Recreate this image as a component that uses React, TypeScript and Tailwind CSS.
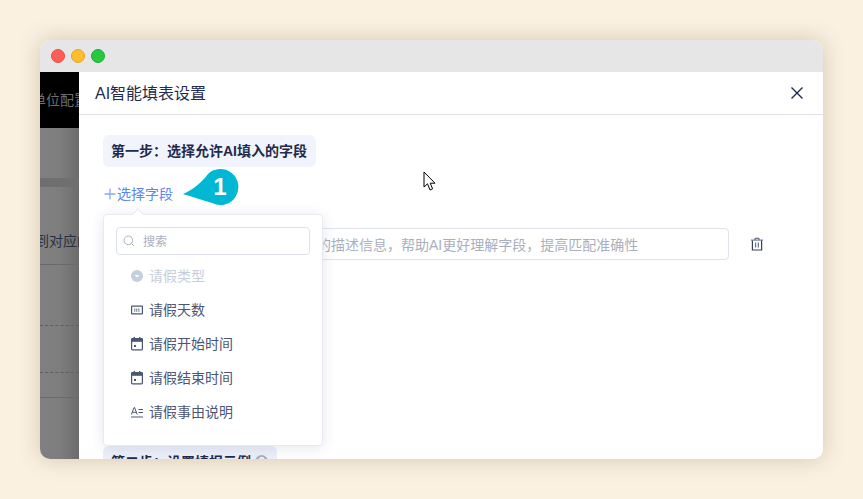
const font = { fontFamily: '"Liberation Sans", "Noto Sans CJK SC", sans-serif' };

function NumIcon() {
  return (
    <svg width="12" height="14" viewBox="0 0 12 14" fill="none">
      <rect x="0.6" y="3.1" width="10.8" height="7.8" rx="0.5" stroke="#4a5674" strokeWidth="1.2" />
      <path d="M3 6.2h6M3 8h6" stroke="#4a5674" strokeWidth="1" strokeDasharray="1.2 0.6" />
    </svg>
  );
}
function CalIcon() {
  return (
    <svg width="12" height="14" viewBox="0 0 12 14" fill="none">
      <rect x="0.6" y="1.6" width="10.8" height="11.2" rx="0.8" stroke="#4a5674" strokeWidth="1.2" />
      <rect x="0.6" y="1.6" width="10.8" height="3.2" fill="#4a5674" />
      <rect x="2.6" y="0" width="1.4" height="2" fill="#4a5674" />
      <rect x="8" y="0" width="1.4" height="2" fill="#4a5674" />
      <rect x="3" y="8" width="2" height="2" fill="#4a5674" />
    </svg>
  );
}
function TextIcon() {
  return (
    <svg width="12" height="14" viewBox="0 0 12 14" fill="none">
      <path d="M0.4 9.5 3 2.6h.6l2.6 6.9M1.4 7.3h3.8" stroke="#4a5674" strokeWidth="1" />
      <path d="M7.5 4.5H12M7.5 7.5H12M0 12h12" stroke="#4a5674" strokeWidth="1.1" />
    </svg>
  );
}
function SelectIcon() {
  return (
    <svg width="12" height="14" viewBox="0 0 12 14">
      <circle cx="6" cy="7" r="6" fill="#c5cedb" />
      <path d="M3.4 5.9h5.2L6 8.6z" fill="#fff" />
    </svg>
  );
}

const items = [
  { icon: <NumIcon />, label: "请假天数" },
  { icon: <CalIcon />, label: "请假开始时间" },
  { icon: <CalIcon />, label: "请假结束时间" },
  { icon: <TextIcon />, label: "请假事由说明" },
];

export default function App() {
  return (
    <div className="h-[499px] w-[863px] overflow-hidden bg-[#faf1e1] pt-10 pl-10" style={font}>
      <div className="relative flex h-[419px] w-[783px] flex-col overflow-hidden rounded-[10px] bg-white shadow-[0_0_22px_rgba(120,90,40,0.28)]">
        <div className="flex h-8 shrink-0 items-center gap-1.5 bg-[#e6e6e6] pl-[11px]">
          <span className="h-3.5 w-3.5 rounded-full border border-[#e5504a] bg-[#ff5f57]" />
          <span className="h-3.5 w-3.5 rounded-full border border-[#e0a52a] bg-[#febc2e]" />
          <span className="h-3.5 w-3.5 rounded-full border border-[#20ad37] bg-[#28c840]" />
        </div>
        <div className="flex min-h-0 flex-1">
          {/* dimmed page behind the drawer */}
          <div className="flex w-[39px] shrink-0 flex-col overflow-hidden bg-gradient-to-r from-[#808080] via-[#7e7e7e] to-[#6c6c6c]">
            <div className="flex h-14 shrink-0 items-center bg-black">
              <span className="-ml-2 text-sm whitespace-nowrap text-[#6e6e6e]">单位配置</span>
            </div>
            <div className="mt-[50px] h-[9px] shrink-0 bg-[#6f6f6f]" />
            <div className="flex h-[78px] shrink-0 items-start border-b border-[#6a6a6a] pt-[44px]">
              <span className="-ml-[5px] text-sm leading-5 whitespace-nowrap text-[#28303f]">到对应的</span>
            </div>
            <div className="h-[61px] shrink-0 border-b border-dashed border-[#5f5f5f]" />
            <div className="h-[47px] shrink-0 border-b border-dashed border-[#5f5f5f]" />
            <div className="h-[25px] shrink-0 border-b border-[#6a6a6a]" />
          </div>
          {/* drawer */}
          <div className="relative min-w-0 flex-1 bg-white">
            <div className="flex h-[43px] items-center justify-between border-b border-[#e1e3ea] pr-[18px] pl-4">
              <span className="pt-px text-base text-[#1f2b4d]">AI智能填表设置</span>
              <svg width="16" height="16" viewBox="0 0 16 16" fill="none">
                <path d="M2.5 2.5l11 11M13.5 2.5l-11 11" stroke="#1f2b4d" strokeWidth="1.4" />
              </svg>
            </div>
            <div className="relative pt-5 pl-6">
              <div className="flex h-8 w-[213px] items-center rounded-md bg-[#f1f4fc] pl-2 text-sm font-bold whitespace-nowrap text-[#1f2b4d]">
                {"第一步\uFF1A选择允许AI填入的字段"}
              </div>
              <div className="mt-[16px] flex h-[22px] items-center text-sm text-[#5b86f0]">
                <svg width="14" height="14" viewBox="0 0 14 14" fill="none">
                  <path d="M7 1.5v11M1.5 7h11" stroke="#8ba8f5" strokeWidth="1.3" />
                </svg>
                选择字段
              </div>
              <div className="mt-[23px] flex items-center pl-[132px]">
                <div className="flex h-8 w-[494px] items-center overflow-hidden rounded border border-[#e1e3ea] pt-px pl-[11px] text-sm whitespace-nowrap text-[#a9afbd]">
                  {"请输入字段的描述信息\uFF0C帮助AI更好理解字段\uFF0C提高匹配准确性"}
                </div>
                <svg className="ml-[21px]" width="14" height="14" viewBox="0 0 14 14" fill="none">
                  <path d="M1 3.2h12" stroke="#7d869c" strokeWidth="1.2" />
                  <path d="M5 3V1.3h4V3" stroke="#4a5674" strokeWidth="1" />
                  <path d="M2.4 3.4v9.6h9.2V3.4" stroke="#33405f" strokeWidth="1.2" />
                  <path d="M5.7 5.5v5M8.3 5.5v5" stroke="#4a5674" strokeWidth="1" />
                </svg>
              </div>
              <div className="mt-[186px] flex h-7 w-[174px] items-start gap-1 rounded-t-md bg-[#eceff8] pt-[9px] pl-2 text-sm leading-[14px] font-bold whitespace-nowrap text-[#1f2b4d]">
                {"第二步\uFF1A设置填报示例"}
                <span className="flex h-[13px] w-[13px] items-center justify-center rounded-full bg-[#a9afbd] text-[10px] leading-none text-white">?</span>
              </div>
            </div>

            {/* tooltip bubble */}
            <svg className="absolute top-[95px] left-[102px]" width="60" height="42" viewBox="0 0 60 42">
              <path d="M2 27 C12 23 21 15 27 7 A18 18 0 1 1 31 36 C21 33 12 30 2 27Z" fill="#00b8d4" />
              <text x="39" y="28" textAnchor="middle" fill="#fff" fontSize="24" fontWeight="700" fontFamily="Liberation Sans">1</text>
            </svg>

            {/* dropdown */}
            <div className="absolute top-[142px] left-[24px] h-[232px] w-[220px] rounded border border-[#e8eaf0] bg-white shadow-[0_2px_14px_rgba(30,50,100,0.12)]">
              <div className="absolute -top-[5px] left-[30px] h-2 w-2 rotate-45 border-t border-l border-[#e8eaf0] bg-white" />
              <div className="pt-3 pr-3 pl-3">
                <div className="flex h-7 items-center gap-[8px] rounded border border-[#dfe1e9] pl-[6px] text-xs text-[#a9afbd]">
                  <svg width="12" height="12" viewBox="0 0 12 12" fill="none">
                    <circle cx="5.3" cy="5.3" r="4.3" stroke="#a9afbd" strokeWidth="1" />
                    <path d="M8.5 8.5l2.3 2.3" stroke="#a9afbd" strokeWidth="1" />
                  </svg>
                  <span className="pt-px">搜索</span>
                </div>
              </div>
              <div className="mt-1 flex flex-col pl-[27px] text-sm text-[#4a5674]">
                <div className="flex h-[34px] items-center gap-[6px] text-[#c5cedb]">
                  <SelectIcon />
                  请假类型
                </div>
                {items.map((it) => (
                  <div key={it.label} className="flex h-[34px] items-center gap-[6px]">
                    {it.icon}
                    {it.label}
                  </div>
                ))}
              </div>
            </div>
          </div>
        </div>
        {/* mouse pointer */}
        <svg className="absolute top-[131px] left-[383px]" width="14" height="22" viewBox="0 0 14 22">
          <path d="M1 1v15l3.5-3.2L7 19l2.6-1.2-2.4-5.6H12z" fill="#fff" stroke="#000" strokeWidth="1" />
        </svg>
      </div>
    </div>
  );
}
